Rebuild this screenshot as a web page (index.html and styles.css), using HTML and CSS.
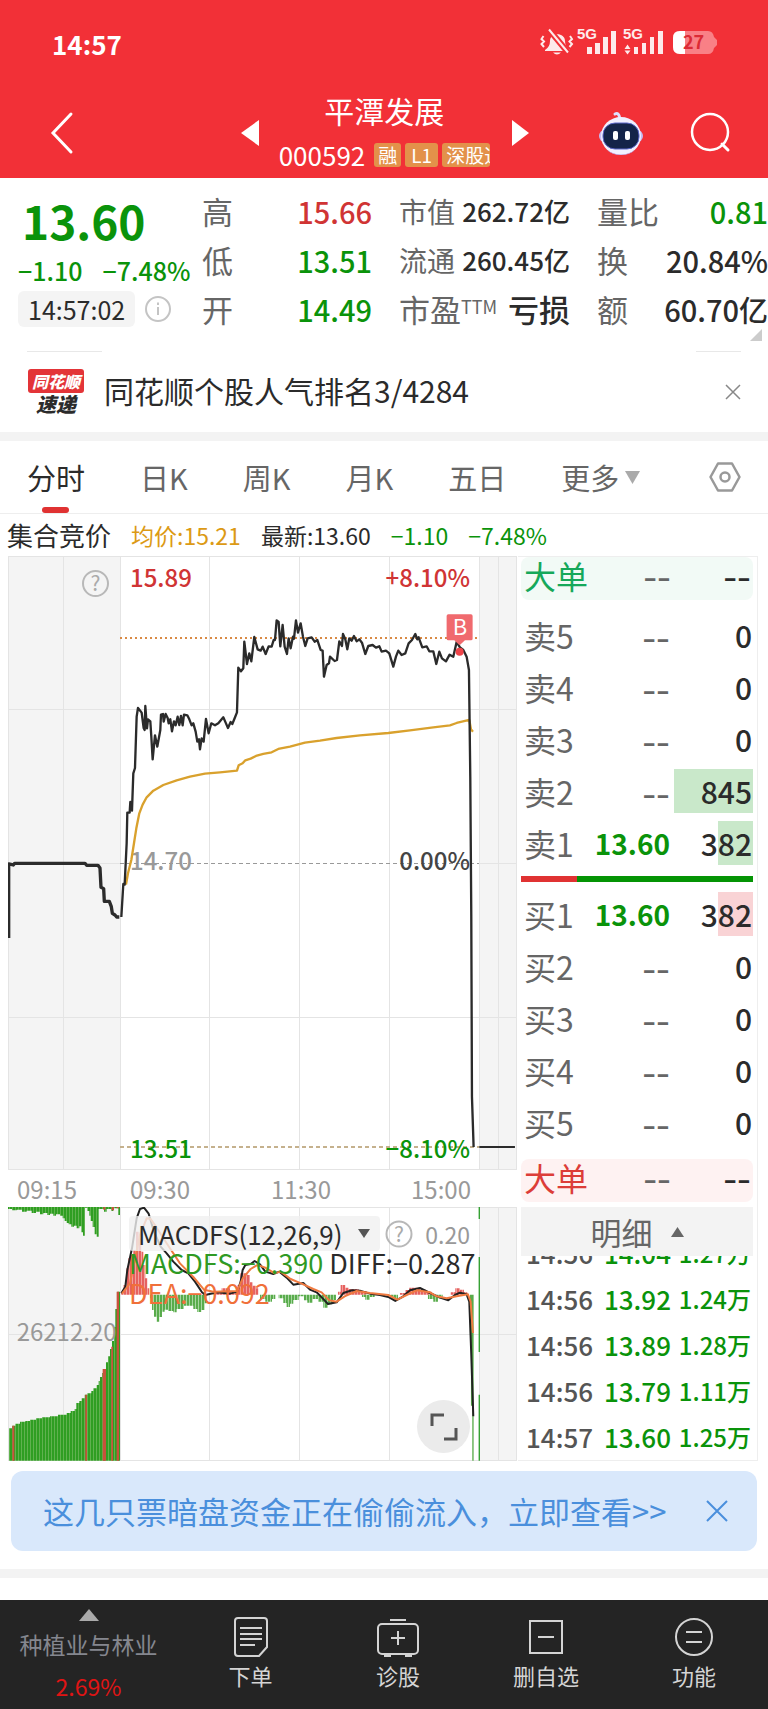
FILE: index.html
```html
<!DOCTYPE html>
<html lang="zh-CN">
<head>
<meta charset="utf-8">
<meta name="viewport" content="width=device-width, initial-scale=1">
<title>平潭发展 000592</title>
<link rel="stylesheet" href="styles.css">
</head>
<body>
<header class="top">
  <div class="status">
    <span class="clock">14:57</span>
    <svg class="status-icons" width="178" height="44" viewBox="540 22 178 44" aria-label="5G 信号, 电量 27%">
      <g fill="#fff" opacity=".9">
        <path d="M545 51q5-3 5-9c0-9 15-9 15 0q0 6 5 9v1h-25zM553 53.500h8q-4 4-8 0z"/>
        <path d="M543.500 37l-2 3 2.500 2.500-2.500 2.500 2.500 3M570 37l2 3-2.500 2.500 2.500 2.500-2.500 3" fill="none" stroke="#fff" stroke-width="2"/>
        <path d="M549 30.500l19 23" stroke="#f23037" stroke-width="6"/>
        <path d="M549 30.500l19 23" stroke="#fff" stroke-width="2"/>
        <path d="M587 48h5v7h-5zM595 44h5v11h-5zM603 38h5v17h-5zM611 32h5v23h-5z"/>
        <path d="M634 48h4v7h-4zM642 44h4v11h-4zM650 38h4v17h-4zM658 32h5v23h-5zM624.500 50l3-4.500 3 4.500zM624.500 51.500h6l-3 4z"/>
        <text x="577" y="40" class="net">5G</text>
        <text x="623" y="40" class="net">5G</text>
      </g>
      <path d="M680 32h28q5 0 6 6l3 3v5l-3 3q-1 6-6 6h-28q-7 0-7-7V39q0-7 7-7z" fill="#f98086"/>
      <path d="M680 32h5v23h-5q-7 0-7-7V39q0-7 7-7z" fill="#fff"/>
      <text x="683" y="50" class="batt">27</text>
    </svg>
  </div>
  <div class="titlebar">
    <button class="icon-btn back" aria-label="返回"><svg width="28" height="44" viewBox="0 0 28 44"><path d="M24 3L6 22l18 19" fill="none" stroke="#fff" stroke-width="3" stroke-linecap="round"/></svg></button>
    <button class="icon-btn prev" aria-label="上一只"><svg width="18" height="26" viewBox="0 0 18 26"><path d="M18 0v26L0 13z" fill="#fff"/></svg></button>
    <div class="stock">
      <h1>平潭发展</h1>
      <div class="code-row"><span class="code">000592</span><span class="tag">融</span><span class="tag tag-l">L1</span><span class="tag tag-cut">深股通</span></div>
    </div>
    <button class="icon-btn next" aria-label="下一只"><svg width="18" height="26" viewBox="0 0 18 26"><path d="M0 0v26L17 13z" fill="#fff"/></svg></button>
    <button class="icon-btn robot" aria-label="智能助手"><svg width="48" height="46" viewBox="0 0 48 46">
      <path d="M18 4q4-2 5 5" fill="none" stroke="#dfe0ff" stroke-width="3" stroke-linecap="round"/>
      <ellipse cx="24" cy="26" rx="22" ry="11" fill="#c6bcf4"/><ellipse cx="24" cy="26" rx="20" ry="19" fill="#f1f0ff"/>
      <path d="M10 40q14 9 28 0-5 5-14 5t-14-5z" fill="#b4a6ee"/>
      <rect x="6" y="13" width="36" height="26" rx="12" fill="#142449" stroke="#5a66c8"/>
      <rect x="16" y="21" width="5" height="9" rx="2" fill="#fff"/><rect x="28" y="21" width="5" height="9" rx="2" fill="#fff"/></svg></button>
    <button class="icon-btn search" aria-label="搜索"><svg width="42" height="42" viewBox="0 0 42 42"><circle cx="20" cy="20" r="18" fill="none" stroke="#fff" stroke-width="2.500"/><path d="M32 32l6 6" stroke="#fff" stroke-width="3" stroke-linecap="round"/></svg></button>
  </div>
</header>

<section class="quote">
  <div class="price">
    <strong class="last down">13.60</strong>
    <div class="change down"><span>−1.10</span><span>−7.48%</span></div>
    <div class="stamp"><time>14:57:02</time><svg width="26" height="26" viewBox="0 0 26 26"><circle cx="13" cy="13" r="12" fill="none" stroke="#c4c4c4" stroke-width="2"/><path d="M13 11v8M13 6.500v2.500" stroke="#c4c4c4" stroke-width="2"/></svg></div>
  </div>
  <dl class="facts">
    <div><dt>高</dt><dd class="up">15.66</dd></div>
    <div><dt>低</dt><dd class="down">13.51</dd></div>
    <div><dt>开</dt><dd class="down">14.49</dd></div>
  </dl>
  <dl class="facts tight">
    <div><dt>市值</dt><dd>262.72亿</dd></div>
    <div><dt>流通</dt><dd>260.45亿</dd></div>
    <div class="wide"><dt>市盈<sup>TTM</sup></dt><dd>亏损</dd></div>
  </dl>
  <dl class="facts">
    <div><dt>量比</dt><dd class="down">0.81</dd></div>
    <div><dt>换</dt><dd>20.84%</dd></div>
    <div><dt>额</dt><dd>60.70亿</dd></div>
  </dl>
  <i class="corner"></i>
</section>

<section class="news">
  <div class="rules"><i></i><i></i></div>
  <div class="news-row">
    <div class="logo"><b>同花顺</b><em>速递</em></div>
    <p>同花顺个股人气排名3/4284</p>
    <button class="icon-btn" aria-label="关闭"><svg width="18" height="18" viewBox="0 0 18 18"><path d="M2 2l14 14M16 2L2 16" stroke="#888" stroke-width="1.500"/></svg></button>
  </div>
</section>

<nav class="tabs">
  <button class="tab active">分时</button>
  <button class="tab">日K</button>
  <button class="tab">周K</button>
  <button class="tab">月K</button>
  <button class="tab">五日</button>
  <button class="tab more">更多<svg width="15" height="13" viewBox="0 0 15 13"><path d="M0 0h15L7.500 13z" fill="#aaa"/></svg></button>
  <button class="tab set" aria-label="设置"><svg width="32" height="30" viewBox="0 0 32 30"><path d="M9 1.500h14L30.500 15 23 28.500H9L1.500 15z" fill="none" stroke="#999" stroke-width="2.500" stroke-linejoin="round"/><circle cx="16" cy="15" r="4.500" fill="none" stroke="#999" stroke-width="2.500"/></svg></button>
</nav>

<div class="legend"><span class="auction">集合竞价</span><span class="avg">均价:15.21</span><span class="now">最新:13.60</span><span class="down">−1.10</span><span class="down">−7.48%</span></div>

<main class="board">
  <div class="charts">
    <svg class="chart" viewBox="8 556 510 614" aria-label="分时走势">
      <path d="M8 556h112v614H8zM479 556h38v614h-38z" fill="#f4f4f4"/>
      <path d="M8 556.500h509M8 709.500h509M8 863.500h112M479 863.500h38M8 1017.500h509M8 1169.500h509M8.500 556v614M63.500 556v614M120.500 556v614M209.500 556v614M299.500 556v614M389.500 556v614M479.500 556v614M498.500 556v614M516.500 556v614" stroke="#e4e4e4" fill="none"/>
      <path d="M120 638h359" stroke="#d98a45" stroke-width="2" stroke-dasharray="2 3"/>
      <path d="M120 863.500h359" stroke="#999" stroke-dasharray="4 3"/>
      <path d="M120 1147h359" stroke="#c5b18d" stroke-width="2" stroke-dasharray="4 3"/>
      <g class="scale"><text x="130" y="587" class="t-up">15.89</text><text x="470" y="587" class="t-up end">+8.10%</text><text x="130" y="870" class="t-grey">14.70</text><text x="470" y="870" class="t-dark end">0.00%</text><text x="130" y="1158" class="t-down">13.51</text><text x="470" y="1158" class="t-down end">−8.10%</text></g>
      <g transform="translate(0 550) scale(.3333)" fill="none" stroke-linejoin="round">
        <path d="M378 1004L384 970 394 930 402 880 409 835 418 790 428 764 440 742 460 722 490 705 530 691 570 680 615 671 660 667 711 662 716 646 728 640 736 631 752 626 768 618 790 612 815 607 835 597 870 590 915 578 960 572 1010 564 1080 556 1165 549 1230 541 1300 532 1350 526 1370 519 1408 510 1413 538 1419 545" stroke="#d9a12d" stroke-width="7"/>
        <path d="M26 1164V942L40 945 44 940H255L260 946H294L300 954 303 1012 311 1016 313 1054H328L334 1070 337 1090 345 1095 350 1101H358" stroke="#2b2b2b" stroke-width="10"/>
        <path d="M364 1101L370 1002 374 1004 380 880 382 788 389 788 391 756 396 782 400 670 405 654 410 500 414 474 425 488 431 534 434 540 436 468 441 535 444 508 451 514 454 560 458 628 465 556 472 590 481 540 483 494 489 492 491 515 497 492 503 504 506 520 511 508 516 544 522 514 527 526 533 500 538 525 543 498 548 526 552 494 562 496 568 508 575 526 580 520 587 545 592 575 597 568 600 598 605 565 611 575 618 507 626 550 634 520 645 526 655 520 670 502 677 518 684 534 692 516 697 522 704 505 711 487 715 353 723 364 730 355 733 275 741 342 748 310 754 334 763 261 773 298 782 302 788 290 797 312 806 289 815 290 821 270 825 270 830 211 836 216 841 289 848 225 854 290 861 312 866 265 872 295 879 260 882 266 888 211 894 248 902 220 909 260 916 288 923 265 935 262 944 275 952 270 962 300 968 302 972 380 980 345 987 340 990 320 1004 333 1011 330 1018 274 1026 288 1029 252 1036 268 1042 298 1048 265 1055 272 1062 258 1070 274 1078 268 1086 278 1096 312 1105 288 1118 285 1128 293 1138 289 1145 305 1158 302 1168 310 1180 350 1188 320 1195 302 1205 315 1216 310 1226 280 1236 270 1246 252 1252 268 1256 262 1267 292 1280 289 1288 304 1300 304 1309 342 1318 305 1326 325 1338 334 1349 314 1360 320 1370 276 1380 292 1390 300 1400 320 1407 360 1411 680 1414 1100 1416 1640 1421 1791" stroke="#2b2b2b" stroke-width="7"/>
        <path d="M1438 1791h107" stroke="#2b2b2b" stroke-width="6"/>
        <path d="M1345 193h68q5 0 5 5v68q0 5-5 5h-18l-16 15-16-15h-18q-5 0-5-5v-68q0-5 5-5z" fill="#f06a6e"/>
        <circle cx="1379" cy="305" r="12" fill="#ee4449"/>
      </g>
      <text x="460" y="635" class="b-mark">B</text>
      <circle cx="95.500" cy="583.500" r="12.500" fill="none" stroke="#b8b8b8" stroke-width="2"/><text x="95.500" y="591" class="q-mark">?</text>
    </svg>
    <div class="axis"><span>09:15</span><span>09:30</span><span>11:30</span><span>15:00</span></div>
    <div class="macd">
    <svg class="chart" viewBox="8 1207 510 254" aria-label="MACD 指标">
      <defs>
        <pattern id="g" width="9" height="8" patternUnits="userSpaceOnUse"><rect width="9" height="8" fill="#2f9e22"/><rect width="2" height="8" fill="#78bd65"/></pattern>
        <pattern id="lg" width="9" height="8" patternUnits="userSpaceOnUse"><rect width="9" height="8" fill="#58ab4b"/><rect width="3" height="8" fill="#a9d7a2"/></pattern>
        <pattern id="lr" width="9" height="8" patternUnits="userSpaceOnUse"><rect width="9" height="8" fill="#e6605f"/><rect width="3" height="8" fill="#f0a29e"/></pattern>
      </defs>
      <path d="M8 1207h112v254H8zM479 1207h38v254h-38z" fill="#f4f4f4"/>
      <path d="M8 1207.500h509M8 1334.500h509M8 1460.500h509M8.500 1207v254M63.500 1207v254M120.500 1207v254M209.500 1207v254M299.500 1207v254M389.500 1207v254M479.500 1207v254M498.500 1207v254M516.500 1207v254" stroke="#e4e4e4" fill="none"/>
      <g transform="translate(0 1195) scale(.3333)">
        <path d="M24 36H360V60H355V40H340V48H334V42H320V50H312V42H296V125H290V118H284V96H278V78H272V62H268V48H262V38H255V122H249V112H244V94H238V100H230V92H222V95H214V88H206V84H200V78H194V70H188V62H180V58H168V62H160V56H150V60H142V54H130V58H120V50H108V54H95V47H80V50H66V44H50V46H36V42H24Z" fill="url(#g)"/>
        <path d="M27 797V700H36V692H46V686H60V680H76V678H90V674H108V670H126V667H150V664H174V659H200V654H212V648H224V642H229V624H238V618H245V610H254V599H262V595H274V588H280V580H290V570H296V558H300V546H306V534H312V522H318V502H324V484H330V462H336V438H342V396H346V342H351V290H360V797Z" fill="url(#g)"/>
        <path d="M37 692h6v105h-6zM256 599h5v198h-5zM308 522h10v275h-10zM334 455h5v342h-5zM350 290h7v507h-7zM310 36h6v8h-6zM335 36h7v10h-7zM350 36h7v4h-7z" fill="#c8513c"/>
        <text x="50" y="438" class="vol">26212.20</text>
        <path d="M364 299V292H370V270H378V220H385V190H392V180H400V165H408V110H418V130H424V170H430V210H436V250H442V280H448V299ZM640 299V290H665V280H690V290H712V270H720V235H742V240H750V262H758V272H768V280H775V299ZM1014 299V290H1022V270H1036V278H1046V282H1076V288H1100V299ZM1200 299V294H1216V285H1228V278H1260V284H1278V290H1295V299ZM1352 299V292H1366V280H1380V284H1392V292H1402V299Z" fill="url(#lr)"/>
        <path d="M450 299V310H456V345H462V365H470V380H478V366H486V350H494V344H504V348H520V352H530V342H552V332H580V342H592V351H604V345H614V325H620V299ZM780 299V312H796V320H816V312H826V299ZM836 299V310H850V324H860V336H870V326H880V315H896V304H912V316H922V323H938V312H954V320H970V338H984V328H996V315H1008V299ZM1086 299V306H1096V314H1110V306H1124V299ZM1172 299V312H1184V318H1194V299ZM1284 299V312H1300V320H1314V310H1328V299Z" fill="url(#lg)"/>
        <path d="M1410 299H1421V797H1417V632H1413V420H1410Z" fill="#58ab4b"/>
        <path d="M1438 36v36M1438 186v285M1438 599v198" stroke="#2e9e2c" stroke-width="4"/>
        <g fill="none" stroke-width="6" stroke-linejoin="round">
          <path d="M364 295L376 275 382 225 396 160 410 70 420 42 432 38 446 56 462 110 482 155 500 175 520 200 545 225 565 235 585 260 606 292 616 300 632 296 655 292 690 296 712 290 722 260 728 225 736 210 752 207 764 198 780 208 796 230 820 237 838 230 860 248 880 269 910 264 930 284 950 292 966 308 984 327 1010 322 1030 294 1056 286 1080 287 1110 296 1140 300 1165 306 1186 318 1210 304 1230 286 1260 279 1290 294 1320 308 1345 316 1365 300 1380 293 1400 298 1408 320 1414 480 1420 664" stroke="#222"/>
          <path d="M366 296L390 265 400 215 420 120 440 70 452 72 470 98 500 145 540 205 580 246 612 284 640 290 712 288 728 250 752 222 772 210 796 218 824 235 842 230 872 252 905 266 940 282 965 292 988 316 1010 320 1034 304 1070 288 1110 294 1165 300 1192 314 1220 300 1250 286 1290 292 1310 304 1340 310 1370 304 1404 298 1412 320 1419 414" stroke="#ef7a40"/>
        </g>
      </g>
    </svg>
    <div class="macd-head">
      <label class="pick"><select aria-label="指标"><option>MACDFS(12,26,9)</option></select><svg width="12" height="9" viewBox="0 0 12 9"><path d="M0 0h12L6 9z" fill="#555"/></svg></label>
      <svg width="28" height="28" viewBox="0 0 28 28"><circle cx="14" cy="14" r="12.500" fill="none" stroke="#b8b8b8" stroke-width="2"/><text x="14" y="22" class="q-mark">?</text></svg>
      <span class="grid-max">0.20</span>
    </div>
    <p class="macd-values"><span class="m1">MACDFS:−0.390</span> <span>DIFF:−0.287</span><br><span class="m2">DEA:−0.092</span></p>
    <button class="expand" aria-label="全屏"><svg width="28" height="28" viewBox="0 0 28 28"><path d="M2 13V2h12M26 15v11H14" fill="none" stroke="#555" stroke-width="3"/></svg></button>
    </div>
  </div>

  <aside class="book">
    <div class="big sell"><b>大单</b><span>--</span><span>--</span></div>
    <table class="levels">
      <tr><th>卖5</th><td class="none">--</td><td>0</td></tr>
      <tr><th>卖4</th><td class="none">--</td><td>0</td></tr>
      <tr><th>卖3</th><td class="none">--</td><td>0</td></tr>
      <tr><th>卖2</th><td class="none">--</td><td><i style="width:79px"></i><span>845</span></td></tr>
      <tr><th>卖1</th><td class="px">13.60</td><td><i style="width:35px"></i><span>382</span></td></tr>
    </table>
    <div class="ratio"><i style="width:24%"></i></div>
    <table class="levels buy">
      <tr><th>买1</th><td class="px">13.60</td><td><i style="width:35px"></i><span>382</span></td></tr>
      <tr><th>买2</th><td class="none">--</td><td>0</td></tr>
      <tr><th>买3</th><td class="none">--</td><td>0</td></tr>
      <tr><th>买4</th><td class="none">--</td><td>0</td></tr>
      <tr><th>买5</th><td class="none">--</td><td>0</td></tr>
    </table>
    <div class="big buyer"><b>大单</b><span>--</span><span>--</span></div>
    <button class="detail">明细<svg width="13" height="10" viewBox="0 0 13 10"><path d="M0 10h13L6.500 0z" fill="#666"/></svg></button>
    <div class="ticks">
      <table>
        <tr><td>14:56</td><td>14.04</td><td>1.27万</td></tr>
        <tr><td>14:56</td><td>13.92</td><td>1.24万</td></tr>
        <tr><td>14:56</td><td>13.89</td><td>1.28万</td></tr>
        <tr><td>14:56</td><td>13.79</td><td>1.11万</td></tr>
        <tr><td>14:57</td><td>13.60</td><td>1.25万</td></tr>
      </table>
    </div>
  </aside>
</main>

<div class="promo"><a href="#">这几只票暗盘资金正在偷偷流入，立即查看&gt;&gt;</a><button class="icon-btn" aria-label="关闭"><svg width="24" height="24" viewBox="0 0 24 24"><path d="M2 2l20 20M22 2L2 22" stroke="#4a8fdc" stroke-width="2"/></svg></button></div>
<div class="band"></div>

<nav class="bottom">
  <a href="#" class="sector"><svg width="20" height="12" viewBox="0 0 20 12"><path d="M0 12h20L10 0z" fill="#aaa"/></svg><span>种植业与林业</span><b>2.69%</b></a>
  <a href="#"><svg width="40" height="42" viewBox="0 0 40 42"><path d="M7 2h26q3 0 3 3v26l-8 9H7q-3 0-3-3V5q0-3 3-3z"/><path d="M9 12h22M9 18h22M9 23h22M9 29h15"/></svg><span>下单</span></a>
  <a href="#"><svg width="46" height="42" viewBox="0 0 46 42"><rect x="3" y="8" width="40" height="30" rx="4"/><path d="M15 4h16M9 40h7M30 40h7M23 15v14M16 22h14"/></svg><span>诊股</span></a>
  <a href="#"><svg width="40" height="42" viewBox="0 0 40 42"><path d="M4 5h32v32H4zM12 21h16"/></svg><span>删自选</span></a>
  <a href="#"><svg width="40" height="42" viewBox="0 0 40 42"><circle cx="20" cy="21" r="18"/><path d="M12 16h16M12 26h16"/></svg><span>功能</span></a>
</nav>
</body>
</html>
```
FILE: styles.css
```css
:root {
  --cjk: "Noto Sans CJK SC", sans-serif;
  --down: #0a930a;
  --up: #d03434;
  --ink: #2b2b2b;
  --grey: #666;
}
* { box-sizing: border-box; }
body { margin: 0; background: #fff; color: var(--ink); font-family: var(--cjk); }
h1, p, dl, dd { margin: 0; }
button { border: 0; padding: 0; background: none; font: inherit; color: inherit; }
a { color: inherit; text-decoration: none; }
svg { flex: none; display: block; }
table { border-collapse: collapse; width: 100%; table-layout: fixed; }
.down { color: var(--down); }
.up { color: var(--up); }
.icon-btn { display: flex; align-items: center; justify-content: center; }

.top { background: #f23037; color: #fff; height: 178px; }
.status { display: flex; justify-content: space-between; align-items: center; height: 86px; padding: 0 50px 0 52px; }
.clock { font-size: 26px; font-weight: 700; }
.net { font: 700 15px "Liberation Sans", sans-serif; }
.batt { font: 700 18px var(--cjk); fill: #dc2a35; }
.titlebar { display: grid; grid-template-columns: 50px 154fr 18px 20px 211px 22px 18px 67fr 48px 45px 42px; align-items: center; height: 90px; padding: 0 36px; }
.back { grid-column: 1; }
.prev { grid-column: 3; }
.stock { grid-column: 5; align-self: start; padding-top: 3px; text-align: center; }
.next { grid-column: 7; }
.robot { grid-column: 9; }
.search { grid-column: 11; }
h1 { font: 400 30px/42px var(--cjk); }
.code-row { display: flex; align-items: center; gap: 4px; height: 48px; }
.code { font-size: 26px; line-height: 36px; margin-right: 5px; }
.tag { background: #e3914a; border-radius: 3px; font: 19px/24px var(--cjk); padding: 0 4px; }
.tag-l { padding: 0 6px; }
.tag-cut { flex: 1; padding-right: 0; overflow: hidden; white-space: nowrap; }

.quote { display: grid; grid-template-columns: 184fr 197fr 198fr 171fr; padding: 8px 0 12px 18px; height: 173px; position: relative; }
.price { display: flex; flex-direction: column; }
.last { font-size: 46px; line-height: 68px; font-weight: 700; padding-left: 4px; }
.change { display: flex; gap: 20px; font-size: 25px; font-weight: 500; line-height: 32px; white-space: nowrap; }
.stamp { display: flex; align-items: center; gap: 10px; margin-top: 5px; }
.stamp time { background: #f4f4f4; border-radius: 6px; font-size: 25px; line-height: 36px; padding: 0 10px; }
.facts { padding-right: 27px; }
.facts:nth-of-type(3) { padding-right: 0; }
.facts div { display: flex; justify-content: space-between; align-items: center; height: 49px; }
.facts dt { font: 31px/40px var(--cjk); color: var(--grey); white-space: nowrap; }
.facts dd { font-size: 29px; font-weight: 500; white-space: nowrap; }
.tight dt { font-size: 28px; }
.tight dd { font-size: 26px; }
.tight .wide dt { font-size: 31px; }
.tight .wide dd { font-size: 31px; }
sup { font-size: 18px; line-height: 1; vertical-align: 8px; }
.corner { position: absolute; right: 6px; bottom: 10px; border: 6px solid transparent; border-right-color: #ccc; border-bottom-color: #ccc; }

.rules { display: flex; justify-content: space-between; padding: 0 27px; }
.rules i { width: 75px; height: 1px; background: #e8e8e8; }
.rules i + i { width: 45px; }
.news { border-bottom: 9px solid #f3f3f3; height: 90px; }
.news-row { display: flex; align-items: center; height: 79px; padding: 0 26px 0 28px; }
.news-row p { flex: 1; font: 30px/40px var(--cjk); margin: 0 0 4px 20px; }
.logo { width: 56px; text-align: center; font-family: var(--cjk); font-style: italic; }
.logo b { display: block; background: #e33438; color: #fff; border-radius: 3px; font-size: 16px; line-height: 24px; font-weight: 900; }
.logo em { display: block; font-size: 20px; line-height: 22px; font-weight: 900; }

.tabs { display: flex; gap: 55px; height: 73px; padding: 0 27px; border-bottom: 1px solid #eee; font: 29px/70px var(--cjk); color: var(--grey); white-space: nowrap; }
.tab { position: relative; display: flex; align-items: center; gap: 6px; }
.set { margin-left: auto; }
.active { color: var(--ink); }
.active::after { content: ""; position: absolute; left: 15px; bottom: 0; width: 27px; height: 6px; border-radius: 3px; background: #e03232; }

.legend { display: flex; align-items: center; height: 42px; padding-left: 7px; gap: 20px; font: 23px/40px var(--cjk); white-space: nowrap; }
.auction { font-size: 26px; }
.avg { color: #dc9a15; }

.board { display: grid; grid-template-columns: minmax(0, 510fr) minmax(0, 240fr) minmax(0, 10fr); padding-left: 8px; }
.chart { width: 100%; height: auto; }
.scale text { font: 500 24px var(--cjk); }
.t-up { fill: var(--up); }
.t-down { fill: var(--down); }
.t-grey { fill: #999; }
.t-dark { fill: #444; }
.end { text-anchor: end; }
.b-mark { font: 22px var(--cjk); fill: #fff; text-anchor: middle; }
.q-mark { font: 21px var(--cjk); fill: #aaa; text-anchor: middle; }
.vol { font: 72px var(--cjk); fill: #999; }
.axis { display: grid; grid-template-columns: 113fr 141fr 140fr 107fr; height: 37px; padding-left: 9px; font: 24px/38px var(--cjk); color: #999; }
.macd { position: relative; }
.macd-head { position: absolute; left: 121px; top: 9px; right: 48px; display: flex; align-items: center; gap: 5px; }
.pick { display: flex; align-items: center; gap: 10px; background: #f0f0f0cc; border-radius: 4px; padding: 0 10px 0 9px; height: 35px; }
.pick select { appearance: none; border: 0; background: none; color: var(--ink); font: 26px var(--cjk); width: 210px; padding: 0; }
.grid-max { margin-left: auto; font-size: 23px; line-height: 30px; color: #999; }
.macd-values { position: absolute; left: 121px; top: 41px; font: 27px/30px var(--cjk); white-space: nowrap; }
.m1 { color: #2f9a24; }
.m2 { color: #f0703a; }
.expand { position: absolute; right: 48px; bottom: 8px; width: 53px; height: 53px; border-radius: 50%; background: #ebebeb; display: flex; align-items: center; justify-content: center; }

.book { border: 1px solid #eee; border-left: 0; padding: 0 4px 0 3px; display: flex; flex-direction: column; }
.big { display: grid; grid-template-columns: 70px 77px 1fr; height: 43px; border-radius: 8px; padding: 0 2px 0 3px; line-height: 34px; font-size: 40px; text-align: right; }
.big b { font: 400 32px/36px var(--cjk); text-align: left; }
.big span:nth-child(2) { color: var(--grey); }
.sell { background: #f2faf6; }
.sell b { color: #16a85a; }
.buyer { background: #fef2f2; margin-top: 11px; }
.buyer b { color: #dc3d38; }
.levels { margin-top: 9px; font-size: 30px; font-weight: 500; }
.levels tr { height: 52px; }
.levels th { width: 70px; font: 400 32px/40px var(--cjk); color: var(--grey); text-align: left; padding: 0 0 0 3px; white-space: nowrap; }
.levels td { padding: 0 1px 0 0; text-align: right; position: relative; line-height: 40px; }
.levels td:nth-child(2) { width: 80px; }
.levels .none { font-size: 40px; font-weight: 400; color: var(--grey); }
.levels .px { color: var(--down); font-size: 28px; font-weight: 700; }
.levels i { position: absolute; right: 0; top: 4px; height: 44px; background: #c9e8ca; }
.levels td span { position: relative; }
.buy i { background: #f9d3d5; }
.ratio { height: 6px; margin-top: 7px; background: #049404; }
.ratio i { display: block; height: 6px; background: #e03232; }
.buy { margin-top: 6px; }
.detail { display: flex; justify-content: center; align-items: center; gap: 18px; margin-top: 5px; height: 49px; background: #f3f3f3; font: 31px/45px var(--cjk); color: var(--grey); }
.ticks { height: 204px; overflow: hidden; display: flex; align-items: flex-end; }
.ticks td { height: 46px; padding: 0; font-size: 26px; font-weight: 500; color: var(--down); text-align: right; line-height: 30px; white-space: nowrap; }
.ticks td:first-child { width: 72px; color: #555; text-align: left; padding-left: 5px; }
.ticks td:nth-child(2) { width: 78px; }
.ticks td:last-child { font-size: 24px; padding-right: 2px; }

.promo { display: flex; justify-content: space-between; align-items: center; height: 80px; margin: 10px 11px 18px; padding: 0 28px 0 32px; border-radius: 12px; background: #d9e8fb; font: 31px/40px var(--cjk); color: #4a8fdc; white-space: nowrap; }
.band { height: 9px; background: #f3f3f3; margin-bottom: 22px; }
.bottom { display: grid; grid-template-columns: 177fr 147fr 148fr 148fr 148fr; height: 109px; background: #242424; color: #d4d4d4; font: 22px/30px var(--cjk); }
.bottom a { display: flex; flex-direction: column; align-items: center; padding-top: 16px; }
.bottom a svg { fill: none; stroke: #d4d4d4; stroke-width: 2; }
.bottom a > span { margin-top: 2px; }
.bottom .sector { padding-top: 9px; color: #85878f; font-size: 23px; }
.bottom .sector svg { stroke: none; }
.bottom .sector > span { margin-top: 8px; }
.sector b { font: 400 23px/30px var(--cjk); color: #e01414; margin-top: 12px; }
```
